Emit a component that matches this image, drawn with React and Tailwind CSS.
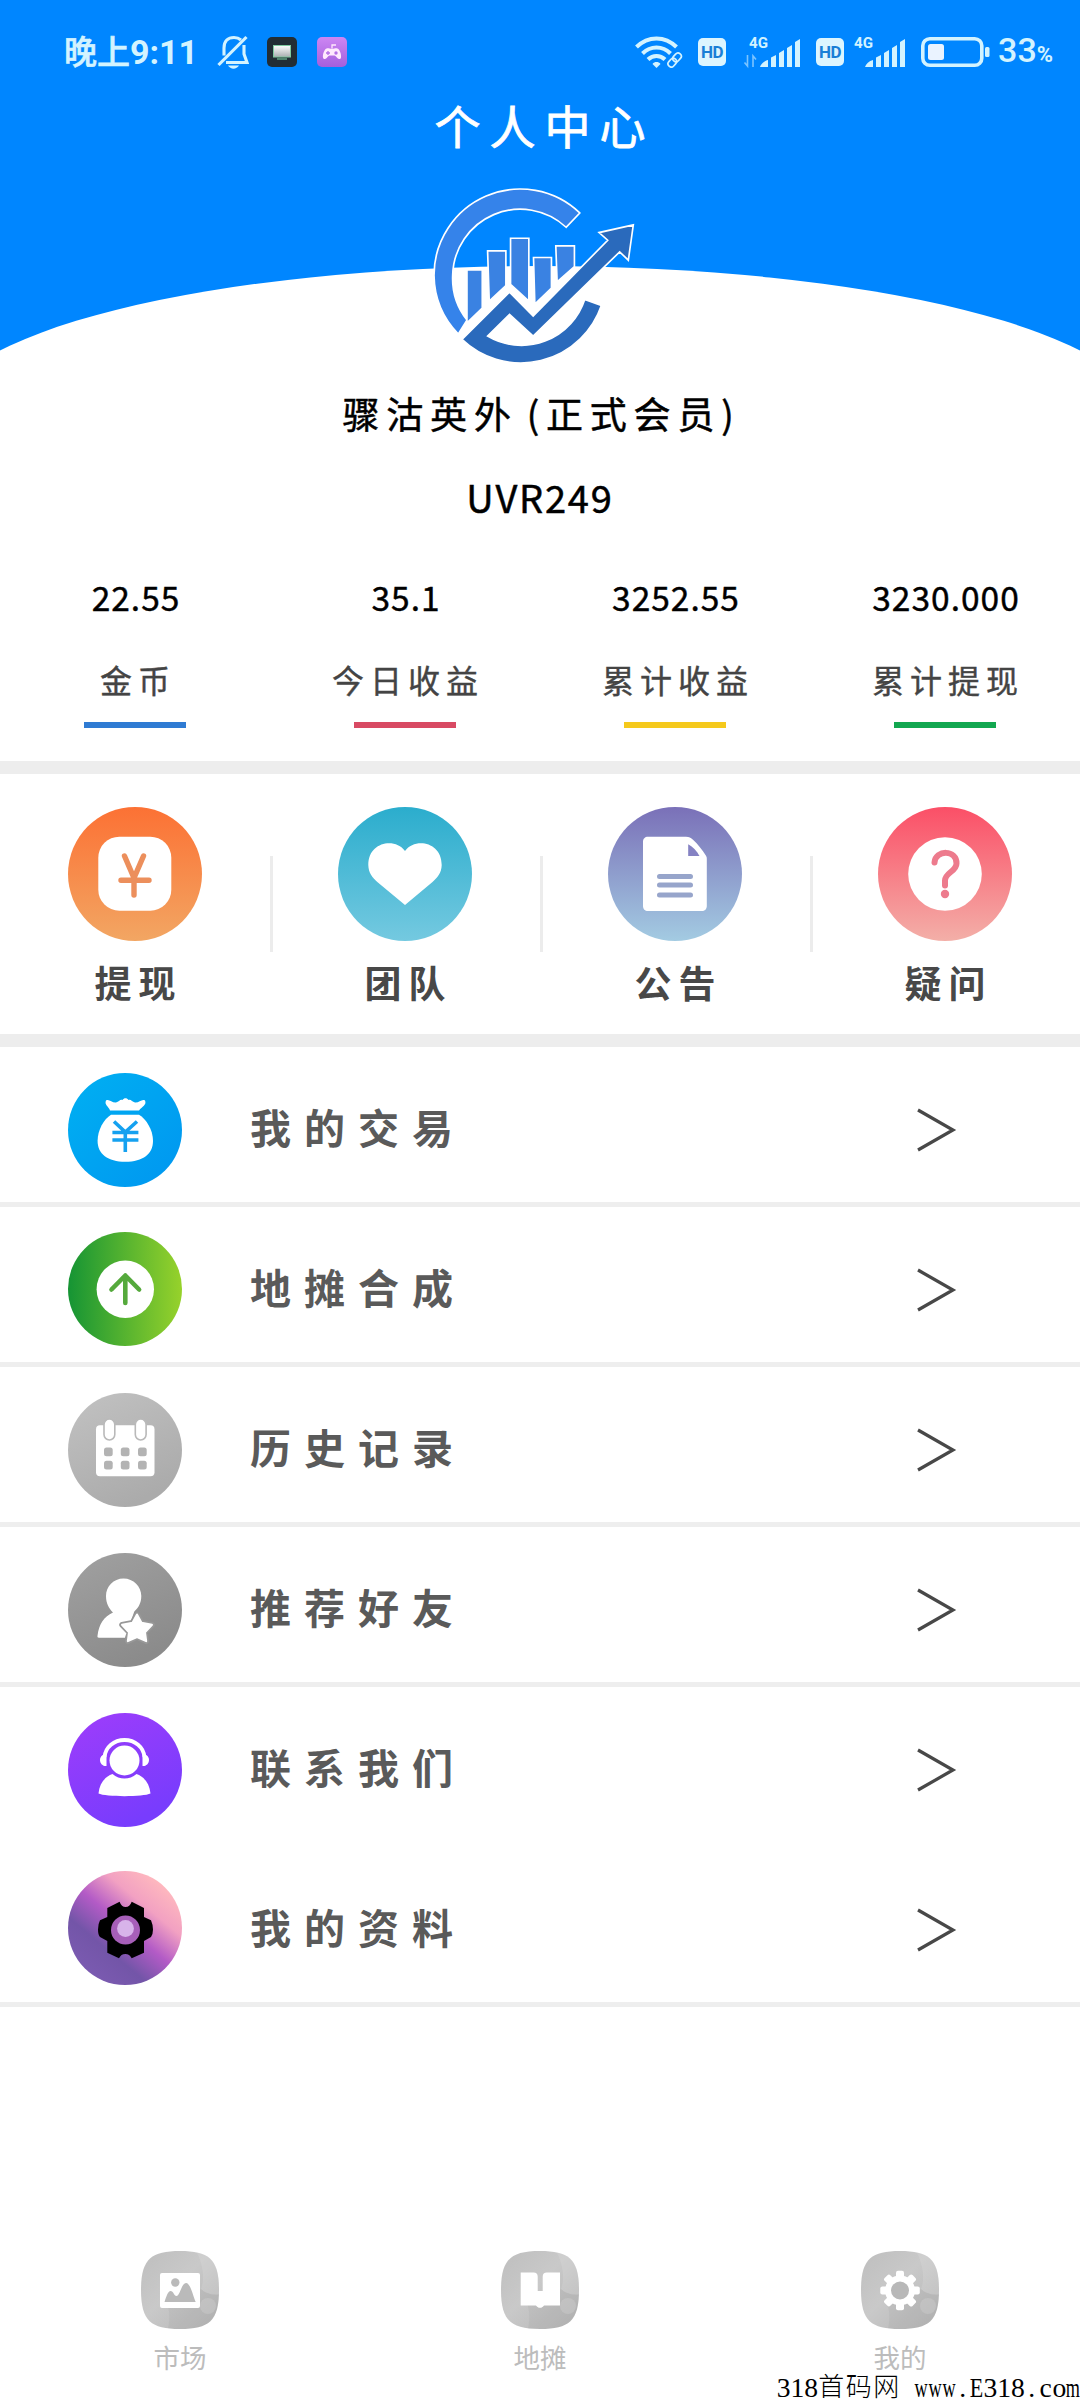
import React from 'react';

const stats = [
  { value: '22.55', label: '金币', bar: 'bg-[#2f7bd3]' },
  { value: '35.1', label: '今日收益', bar: 'bg-[#d84a63]' },
  { value: '3252.55', label: '累计收益', bar: 'bg-[#f5c91c]' },
  { value: '3230.000', label: '累计提现', bar: 'bg-[#12a750]' },
];

const BellOff = () => (
  <svg viewBox="0 0 32 34" className="w-8 h-[34px]" fill="none" stroke="#d3f3ff" strokeWidth="3.1">
    <path d="M7 20.500V13C7 6 11 2.500 17 2.500c3 0 5 .8 7 2.500M27 10v9l3 8.500H9" />
    <path d="M1.500 30L29.500 2" />
    <path d="M11 30.500h11c-1 2-3.500 3.200-5.500 3.200s-4.500-1.200-5.500-3.200z" fill="#d3f3ff" stroke="none" />
  </svg>
);

const ScreenApp = () => (
  <svg viewBox="0 0 30 30" className="w-[30px] h-[30px]">
    <defs>
      <linearGradient id="screen" x1="0" y1="0" x2="0" y2="1">
        <stop stopColor="#ffffff" />
        <stop offset="1" stopColor="#a9adb0" />
      </linearGradient>
    </defs>
    <rect width="30" height="30" rx="5" fill="#222d35" />
    <rect x="6.500" y="8.500" width="17" height="11.500" fill="url(#screen)" stroke="#7fc9a0" />
    <path d="M10 22h10" stroke="#6fbf95" strokeWidth="1.200" />
  </svg>
);

const GameApp = () => (
  <svg viewBox="0 0 30 30" className="w-[30px] h-[30px]">
    <defs>
      <linearGradient id="game" x1="0" y1="0" x2="0" y2="1">
        <stop stopColor="#cd86f3" />
        <stop offset="1" stopColor="#a45fdd" />
      </linearGradient>
    </defs>
    <rect width="30" height="30" rx="5" fill="url(#game)" />
    <path d="M15 11.500V8h4" fill="none" stroke="#ffe9fb" strokeWidth="1.300" />
    <path d="M9.500 11.500c2-.6 3 .3 5.500.3s3.500-.9 5.500-.3c2.500 1 4 6.500 3.500 9-.4 2-2.500 2-3.700.5-1.300-1.500-1.800-2.500-3-2.500h-4.600c-1.200 0-1.700 1-3 2.500-1.200 1.500-3.300 1.500-3.700-.5-.5-2.500 1-8 3.500-9z" fill="#ffeafd" />
    <path d="M9 16h4M11 14v4" stroke="#b56fe6" strokeWidth="1.300" />
    <circle cx="19" cy="16" r="1.700" fill="#b56fe6" />
  </svg>
);

const Wifi = () => (
  <svg viewBox="0 0 48 32" className="w-12 h-8" fill="none" stroke="#d3f3ff">
    <path d="M1.500 11C13-.5 30-.5 41.500 11" strokeWidth="4" />
    <path d="M7.500 17.500c8-8 20-8 28 0" strokeWidth="4" />
    <path d="M13 23.500c5-4.800 12-4.800 17 0" strokeWidth="4" />
    <path d="M17.500 28c2-2.600 6-2.600 8 0l-4 4z" fill="#d3f3ff" stroke="none" />
    <g strokeWidth="1.700" transform="rotate(-48 40 24)">
      <rect x="31.500" y="20.500" width="9.500" height="6.500" rx="3.200" />
      <rect x="38.500" y="20.500" width="9.500" height="6.500" rx="3.200" />
    </g>
  </svg>
);

const HdBadge = () => (
  <span className="flex w-7 h-7 items-center justify-center rounded-[5px] bg-[#dcf5ff] font-[Roboto] text-[17px] font-bold leading-6 tracking-[-0.5px] text-[#1a7fd6]">
    HD
  </span>
);

const Signal = ({ arrows }) => (
  <svg viewBox="0 0 56 32" className="w-14 h-8 overflow-visible" fill="#d3f3ff">
    <text x="5" y="12" fontFamily="Roboto" fontWeight="700" fontSize="15" textLength="19" lengthAdjust="spacingAndGlyphs">4G</text>
    {arrows && (
      <path d="M3.500 19v11L0.500 26.500M9 31V20l3 3.500" fill="none" stroke="#7cc4ff" strokeWidth="1.600" />
    )}
    <path d="M16 31c1-3 4-6 8-7v7zM27 21.500l5-2.500v12h-5zM35 17l5-3v17h-5zM43 12l5-3v22h-5zM51 6l5-3v28h-5z" />
  </svg>
);

const Battery = () => (
  <svg viewBox="0 0 69 30" className="w-[69px] h-[30px]">
    <rect x="1.800" y="1.800" width="59" height="26.400" rx="7" fill="none" stroke="#d3f3ff" strokeWidth="3.600" />
    <rect x="7" y="7" width="16" height="16" rx="2.500" fill="#eaf3ff" />
    <rect x="64" y="10" width="4.500" height="10" rx="1.500" fill="#d3f3ff" />
  </svg>
);

const Logo = () => (
  <svg viewBox="95 50 610 532" className="w-[203px] h-[177px]" strokeWidth="5" stroke="#ffffff">
    <path
      d="M174 492A259 259 0 0 1 101 316A259 259 0 0 1 539 128L498 171A203 203 0 0 0 157 316A203 203 0 0 0 200 450Z"
      fill="#3583ea"
    />
    <path d="M200 299h46v115l-46 44z" fill="#3a82e2" />
    <path d="M262 242h55v104l-50 47z" fill="#3a82e2" />
    <path d="M331 204h55v189l-55-50z" fill="#3a82e2" />
    <path d="M400 262h54v92l-50 48z" fill="#3a82e2" />
    <path d="M467 227h56v62l-52 46z" fill="#3a82e2" />
    <path
      d="M185 508L328 366L399 438L623 210L597 187L700 164L685 270L659 245L399 498L328 433L262 498A200 200 0 0 0 554 388L604 406A256 256 0 0 1 185 508Z"
      fill="#2a6abc"
    />
  </svg>
);

const actions = [
  {
    label: '提现',
    from: '#fc7134',
    to: '#f2a663',
    icon: (
      <>
        <rect x="30.300" y="29.700" width="73" height="74" rx="21" fill="#fff" />
        <path d="M56.500 49L66 71l9.500-22M66 71v17M53 73.300h28" stroke="#ec8f5c" strokeWidth="5.400" strokeLinecap="round" fill="none" />
      </>
    ),
  },
  {
    label: '团队',
    from: '#2badcd',
    to: '#74c9e0',
    icon: (
      <path d="M67 44C57 30 30 35 30.300 58c.2 8 4 12.500 9 17L67 98l27.500-23c5-4.500 9-9 9.200-17C104 35 77 30 67 44z" fill="#fff" />
    ),
  },
  {
    label: '公告',
    from: '#7a70b8',
    to: '#a3cbe2',
    icon: (
      <>
        <path d="M40 29.700h38c3 0 5 1 7 3 5 4.500 9 10 13 16 .7 1 .8 2 .8 3V99c0 3-2 5-5 5H40c-3 0-5-2-5-5V34.700c0-3 2-5 5-5z" fill="#fff" />
        <path d="M80.200 37.300V49h11.300c-2.500-5-6.500-9-11.300-11.700z" fill="#8582c3" />
        <path d="M51.500 69.500h31M51.500 78h31M51.500 88h31" stroke="#97a5cb" strokeWidth="5" strokeLinecap="round" />
      </>
    ),
  },
  {
    label: '疑问',
    from: '#fb4f67',
    to: '#f3afa8',
    icon: (
      <>
        <circle cx="67" cy="67" r="36.800" fill="#fff" />
        <path d="M56.500 55.500c1-13 22.500-13 22 1 0 8-11.500 9-11.500 17v5" stroke="#ed7b8d" strokeWidth="6" strokeLinecap="round" fill="none" />
        <circle cx="67" cy="87" r="4.200" fill="#ed7b8d" />
      </>
    ),
  },
];

const menu = [
  {
    label: '我的交易',
    stops: ['#00b0f2', '#0096f0'],
    dir: [0, 0, 1, 1],
    line: true,
    icon: (
      <>
        <path d="M42 37.500c-1-4-6-5.500-4-10 3-2 6 2.500 10 2 3-.5 4-3.500 6.500-2.500 1.500-2.500 4.500-2.500 6 0 2.500-1 3.500 2 6.500 2.500 4 .5 7-4 10-2 2 4.500-3 6-6 10z" fill="#fff" />
        <path d="M43 41.700h28c7 4 14 15 14 26C85 81 75 88.700 57.300 88.700S29.600 81 29.600 67.700C29.600 57 36 46 43 41.700z" fill="#fff" />
        <path d="M46 48.500l11.300 10.500L69 48.500M44.400 59.500h26M44.400 67h26M57.300 59v20" stroke="#15a1f0" strokeWidth="3.600" fill="none" />
      </>
    ),
  },
  {
    label: '地摊合成',
    stops: ['#159434', '#97d22b'],
    dir: [0, 0, 1, 0],
    line: true,
    icon: (
      <>
        <circle cx="57.300" cy="57.300" r="28.700" fill="#fff" />
        <path d="M57.300 71V44M43.500 57.500l13.800-14 13.800 14" stroke="#55a93c" strokeWidth="4.600" strokeLinecap="round" strokeLinejoin="round" fill="none" />
      </>
    ),
  },
  {
    label: '历史记录',
    stops: ['#c2c2c2', '#ababab'],
    dir: [0, 0, 0.5, 1],
    line: true,
    icon: (
      <>
        <rect x="28" y="32.300" width="58.500" height="51" rx="4" fill="#fff" />
        <rect x="36" y="26" width="10.800" height="21" rx="5.400" fill="#fff" stroke="#b9b9b9" strokeWidth="1.600" />
        <rect x="67.300" y="26" width="10.800" height="21" rx="5.400" fill="#fff" stroke="#b9b9b9" strokeWidth="1.600" />
        {[36, 52.8, 70].map((x) =>
          [54.5, 67.8].map((y) => <rect key={`${x}-${y}`} x={x} y={y} width="8.700" height="8.700" rx="2.500" fill="#b3b3b3" />)
        )}
      </>
    ),
  },
  {
    label: '推荐好友',
    stops: ['#a1a1a1', '#8b8b8b'],
    dir: [0, 0, 0.5, 1],
    line: true,
    icon: (
      <>
        <path d="M55.500 25.500c10 0 17.800 8 17.800 17.500 0 7-3 12-7 15.500L57 84.700H31c-1.500 0-1.700-1-1.500-2C31 71 36 63.500 45 59.500c-4-4-7-9-7-16.500 0-9.500 7.500-17.500 17.500-17.500z" fill="#fff" />
        <path d="M69 61.500l4.500 8.300 10.500 2-7 7.400 1.200 9-9.200-4.200-9.200 4.200 1.200-9-7-7.400 10.500-2z" fill="#989898" stroke="#989898" strokeWidth="5.500" strokeLinejoin="round" />
        <path d="M69 61.500l4.500 8.300 10.500 2-7 7.400 1.200 9-9.200-4.200-9.200 4.200 1.200-9-7-7.400 10.500-2z" fill="#fff" stroke="#fff" strokeWidth="2" strokeLinejoin="round" />
      </>
    ),
  },
  {
    label: '联系我们',
    stops: ['#9f3dfb', '#783cfd'],
    dir: [0, 0, 0.5, 1],
    line: false,
    icon: (
      <>
        <path d="M36.500 44c1-10 9.500-17 20-17s19 7 20 17" fill="none" stroke="#fff" strokeWidth="3.800" />
        <path d="M38.500 41v12c-3 .5-6.500-2-6.500-6s3.500-6 6.500-6zM74.500 41v12c3 .5 6.500-2 6.500-6s-3.500-6-6.500-6z" fill="#fff" />
        <path d="M44.500 61c-8 3-13 9.500-14 19.500 7 3.500 45 3.500 52 0-1-10-6-16.500-14-19.500-7 6-17 6-24 0z" fill="#fff" />
        <circle cx="56.500" cy="47.500" r="15" fill="#fff" />
      </>
    ),
  },
  {
    label: '我的资料',
    stops: ['#ffb9be', '#f2a1c2', '#b35bc6', '#7355a8', '#7a5ab0'],
    dir: [0.85, 0.12, 0.2, 0.9],
    line: true,
    icon: (
      <>
        <path
          d="M51.600 30.700L39.300 37v9L32 49.300Q30 53 30 58.500T32 66l7.300 4v11.700L51 87.300q2-4.300 6.300-4.300t6.400 4.300L76 81.700V70l7-4q2-3 2-7.500t-2-9.200L76 46v-9l-12.300-6.300q-2 5.300-6.100 5.300t-6-5.300z"
          fill="#000"
        />
        <circle cx="57.500" cy="59" r="14.500" fill="#a75fb9" />
        <circle cx="57.500" cy="57.500" r="8.400" fill="#d8b4ea" />
      </>
    ),
  },
];

const tabs = [
  {
    label: '市场',
    icon: (
      <>
        <rect x="19" y="22" width="40" height="35" rx="2" fill="#fff" />
        <path d="M23.500 51c2-6 3.500-11 6-11 3 0 3.500 5 6 5 3.500 0 5-13 9.500-13s7 13 9.700 19z" fill="#bababa" />
        <circle cx="34.300" cy="31.500" r="4.200" fill="#bababa" />
      </>
    ),
  },
  {
    label: '地摊',
    icon: (
      <path d="M19.700 21.500h13c2.500 0 4 1.500 4 4V40h5V25.500c0-2.500 1.500-4 4-4H59v33H44c-2 0-2 2.300-5 2.300s-3-2.300-5-2.300H19.700z" fill="#fff" />
    ),
  },
  {
    label: '我的',
    icon: (
      <>
        {[0, 45, 90, 135].map((a) => (
          <rect key={a} x="35" y="19.700" width="8" height="39.500" rx="2" fill="#fff" transform={`rotate(${a} 39 39.500)`} />
        ))}
        <circle cx="39" cy="39.500" r="15" fill="#fff" />
        <circle cx="39" cy="39.500" r="9" fill="#b8b8b8" />
      </>
    ),
  },
];

const StatusBar = () => (
  <div className="flex h-[104px] items-center justify-between pl-16 pr-[27px] text-[#d3f3ff]">
    <div className="flex items-center font-[Roboto,'Noto_Sans_CJK_SC',sans-serif] text-[34px] font-bold leading-[48px]">
      <span className="w-[133px] whitespace-nowrap">
        <span className="text-[33px] font-medium [-webkit-text-stroke:0.6px_#d3f3ff]">晚上</span>9:11
      </span>
      <span className="ml-5"><BellOff /></span>
      <span className="ml-[18px]"><ScreenApp /></span>
      <span className="ml-5"><GameApp /></span>
    </div>
    <div className="flex items-center">
      <Wifi />
      <span className="ml-[15px]"><HdBadge /></span>
      <span className="ml-[18px]"><Signal arrows /></span>
      <span className="ml-4"><HdBadge /></span>
      <span className="ml-[5px]"><Signal /></span>
      <span className="ml-4"><Battery /></span>
      <span className="ml-2 font-[Roboto] text-[34px] font-medium leading-[48px]">
        33<span className="text-[22px] font-bold">%</span>
      </span>
    </div>
  </div>
);

// Glossy grey tile behind every tab icon
const TabTile = ({ id, children }) => (
  <svg viewBox="0 0 78 78" className="w-[78px] h-[78px]">
    <defs>
      <linearGradient id={id} x1="0" y1="0" x2="1" y2="1">
        <stop stopColor="#bebebe" />
        <stop offset=".45" stopColor="#c9c9c9" />
        <stop offset="1" stopColor="#b4b4b4" />
      </linearGradient>
      <clipPath id={`${id}-clip`}>
        <path d="M39 0C68 0 78 8 78 39S68 78 39 78 0 70 0 39 10 0 39 0z" />
      </clipPath>
    </defs>
    <g clipPath={`url(#${id}-clip)`}>
      <rect width="78" height="78" fill={`url(#${id})`} />
      <path d="M55 0h23v44c-8 0-14-2-18-6 4-10 2-26-5-38z" fill="#fff" opacity=".12" />
      <path d="M25 50l35-12c4 4 10 6 18 5v35H27c2-10 2-20-2-28z" fill="#8f8f8f" opacity=".12" />
      <circle cx="67" cy="55" r="8" fill="#fff" opacity=".15" />
    </g>
    {children}
  </svg>
);

const Watermark = () => (
  <div className="absolute bottom-0 right-0 flex h-6 items-center whitespace-pre font-['Liberation_Serif','Noto_Sans_CJK_SC',serif] text-[27.600px] leading-6 text-black">
    {'318首码网 www.E318.com'.split('').map((ch, i) => {
      if (/[首码网]/.test(ch)) return <span key={i} className="w-[27.500px] text-[26px] font-light">{ch}</span>;
      return (
        <span key={i} className="flex w-[13.800px] justify-center">
          <span className={/[wm]/.test(ch) ? 'scale-x-[0.66]' : ch === 'E' ? 'scale-x-[0.8]' : ''}>{ch}</span>
        </span>
      );
    })}
  </div>
);

const App = () => {
  return (
    <div className="relative flex h-[2400px] w-[1080px] flex-col overflow-hidden bg-white font-['Noto_Sans_CJK_SC',sans-serif]">
      {/* Header */}
      <header className="relative h-[366px] shrink-0">
        <div className="absolute inset-x-0 top-0 h-[352px] overflow-hidden bg-[#0086ff]">
          <div className="absolute -left-[60px] top-[266px] h-[300px] w-[1200px] rounded-[50%] bg-white" />
        </div>
        <div className="relative">
          <StatusBar />
          <h1 className="h-[83px] pl-[9px] text-center text-[46px] leading-[41px] tracking-[9px] text-white [-webkit-text-stroke:0.8px_#fff]">个人中心</h1>
          <div className="pl-[432px]"><Logo /></div>
        </div>
      </header>

      {/* Profile */}
      <section className="flex h-[180px] shrink-0 flex-col items-center pt-[23px] text-black [-webkit-text-stroke:0.5px_#000]">
        <p className="h-[84px] whitespace-pre pl-[3px] text-[37px] leading-[48px] tracking-[6.800px]">骤沽英外<span className="ml-[9px]">(</span>正式会员)</p>
        <p className="text-[38px] leading-[48px] tracking-[1.800px]">UVR249</p>
      </section>

      {/* Balances */}
      <section className="grid h-[215px] shrink-0 grid-cols-4 pt-[31px]">
        {stats.map((s) => (
          <div key={s.label} className="flex flex-col items-center">
            <span className="pl-[2px] text-[33.500px] leading-[40px] tracking-[1px] text-black [-webkit-text-stroke:0.4px_#000]">{s.value}</span>
            <span className="mt-[42px] pl-[6px] text-[32px] leading-[40px] tracking-[6px] text-[#444] [-webkit-text-stroke:0.4px_#444]">{s.label}</span>
            <span className={`mt-[23px] h-[6px] w-[102px] ${s.bar}`} />
          </div>
        ))}
      </section>
      <div className="h-[13px] shrink-0 bg-[#ededed]" />

      {/* Shortcuts */}
      <section className="grid h-[260px] shrink-0 grid-cols-4">
        {actions.map((a, i) => (
          <div key={a.label} className="relative flex flex-col items-center pt-[33px]">
            <svg viewBox="0 0 134 134" className="h-[134px] w-[134px]">
              <defs>
                <linearGradient id={`action-${i}`} x1="0" y1="0" x2="0" y2="1">
                  <stop stopColor={a.from} />
                  <stop offset="1" stopColor={a.to} />
                </linearGradient>
              </defs>
              <circle cx="67" cy="67" r="67" fill={`url(#action-${i})`} />
              {a.icon}
            </svg>
            <span className="mt-[17px] pl-[7px] text-[37px] font-bold leading-[48px] tracking-[7px] text-[#484848]">{a.label}</span>
            {i < actions.length - 1 && <span className="absolute right-[-3px] top-[82px] h-[96px] w-[3px] bg-[#ececec]" />}
          </div>
        ))}
      </section>
      <div className="h-[13px] shrink-0 bg-[#ededed]" />

      {/* Menu */}
      <ul className="shrink-0">
        {menu.map((m, i) => (
          <li key={m.label} className={`flex h-[160px] items-center border-b-[5px] pl-[68px] pt-[10px] ${m.line ? 'border-[#eeeeee]' : 'border-white'}`}>
            <svg viewBox="0 0 114 114" className={`h-[114px] w-[114px] shrink-0 ${i === menu.length - 1 ? 'mb-[4px]' : i === 1 ? 'mb-[2px]' : ''}`}>
              <defs>
                <linearGradient id={`menu-${i}`} x1={m.dir[0]} y1={m.dir[1]} x2={m.dir[2]} y2={m.dir[3]}>
                  {m.stops.map((c, n) => <stop key={n} offset={n / (m.stops.length - 1)} stopColor={c} />)}
                </linearGradient>
              </defs>
              <circle cx="57" cy="57" r="57" fill={`url(#menu-${i})`} />
              {m.icon}
            </svg>
            <span className="mb-[8px] ml-[68px] w-[667px] text-[41px] font-bold leading-[56px] tracking-[13px] text-[#5a5a5a]">{m.label}</span>
            <svg viewBox="0 0 40 44" className="h-11 w-10 shrink-0" fill="none" stroke="#484848" strokeWidth="3.200">
              <path d="M1 2l35 20L1 42" />
            </svg>
          </li>
        ))}
      </ul>

      {/* Bottom tabs */}
      <nav className="mt-auto grid h-[149px] shrink-0 grid-cols-3">
        {tabs.map((t, i) => (
          <div key={t.label} className="flex flex-col items-center">
            <TabTile id={`tab-${i}`}>{t.icon}</TabTile>
            <span className="mt-[10px] text-[26.500px] leading-[36px] text-[#bcbcbc]">{t.label}</span>
          </div>
        ))}
      </nav>
      <Watermark />
    </div>
  );
};

export default App;
